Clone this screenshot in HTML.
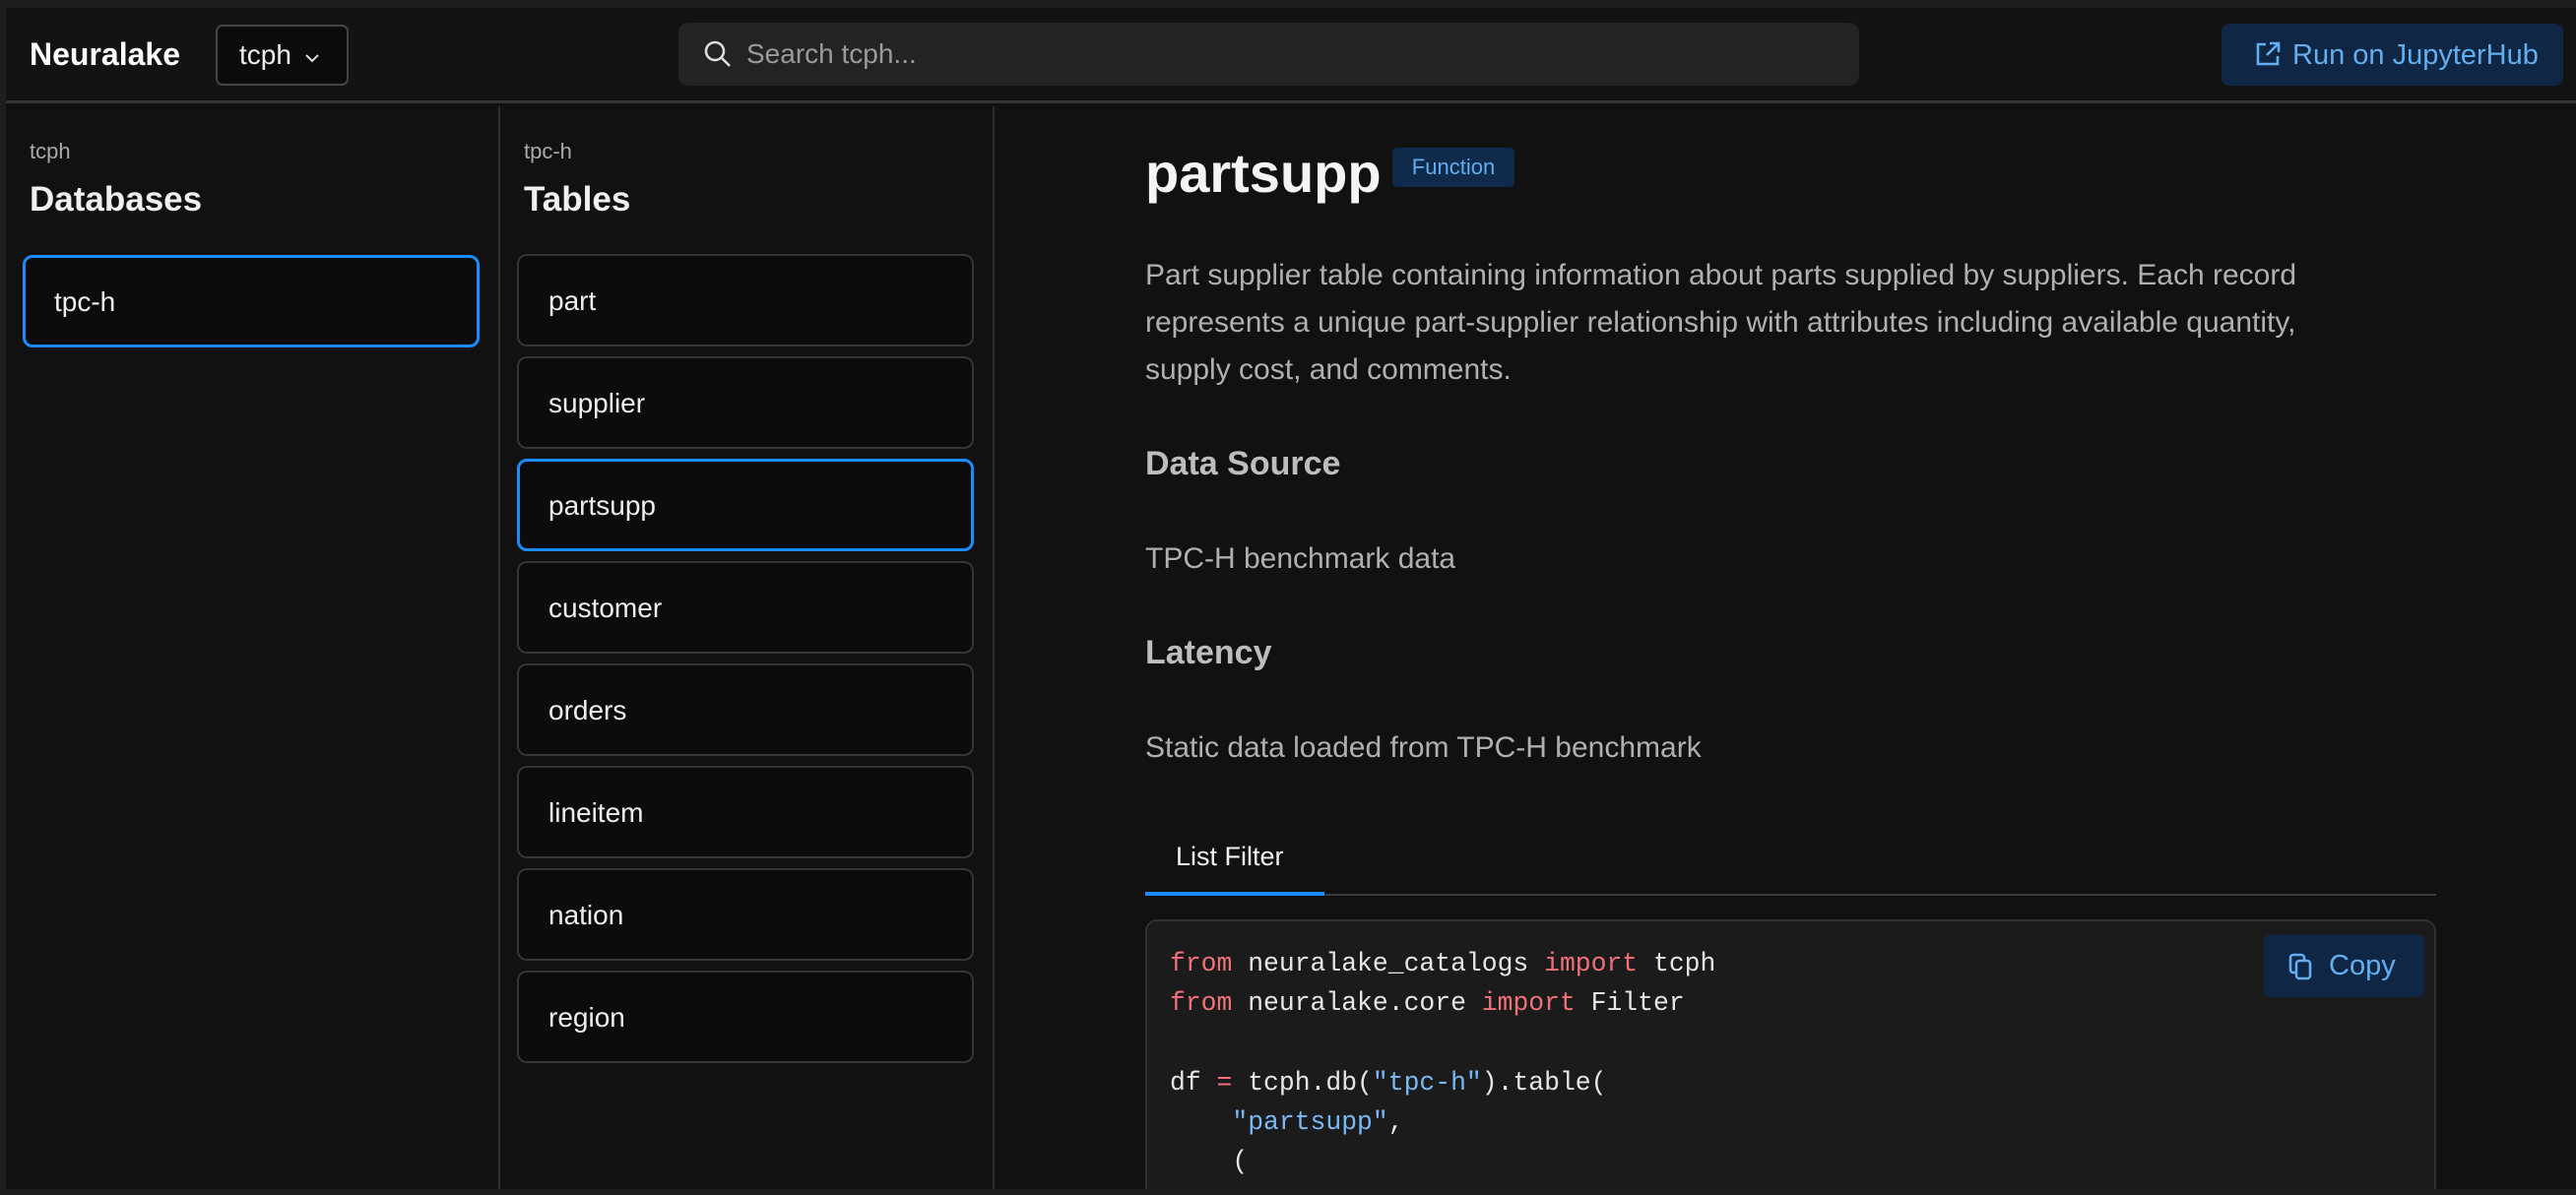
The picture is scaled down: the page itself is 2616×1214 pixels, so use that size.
<!DOCTYPE html>
<html><head><meta charset="utf-8"><style>
*{box-sizing:border-box;margin:0;padding:0}
body{width:2616px;height:1214px;overflow:hidden;background:#1e1e1e;font-family:"Liberation Sans",sans-serif;color:#eee;position:relative}
.app{position:absolute;left:6px;top:8px;right:0;bottom:6px;background:#111;overflow:hidden}
.hdr{position:absolute;left:0;top:0;right:0;height:97px;background:#131313;border-bottom:3px solid #333}
.a{position:absolute}
.sep{position:absolute;top:100px;bottom:0;width:2px;background:#2e2e2e}
.item{position:absolute;height:94px;border:2px solid #353535;border-radius:10px;background:#0c0c0c;font-size:28px;color:#eee;padding-left:30px;line-height:92px}
.item.sel{border:3px solid #1a8cff;padding-left:29px;line-height:90px}
.p{font-size:30px;color:#b0b0b0;line-height:48px}
.h{font-size:34px;font-weight:bold;color:#bdbdbd}
.code{font-family:"Liberation Mono","DejaVu Sans Mono",monospace;font-size:26.4px;line-height:40.3px;color:#e6e6e6;white-space:pre}
.k{color:#f07178}.s{color:#7ab8f5}
</style></head><body>
<div class="app">
<div class="hdr">
 <div class="a" style="left:24px;top:29px;font-size:32px;font-weight:bold;color:#fff">Neuralake</div>
 <div class="a" style="left:213px;top:17px;width:135px;height:62px;border:2px solid #444;border-radius:7px;background:#0c0c0c;font-size:28px;line-height:58px;padding-left:22px;color:#eee">tcph <svg width="18" height="12" viewBox="0 0 18 12" style="margin-left:4px"><path d="M3 3l6 6 6-6" stroke="#ddd" stroke-width="2" fill="none"/></svg></div>
 <div class="a" style="left:683px;top:15px;width:1199px;height:64px;background:#232323;border-radius:10px">
  <svg class="a" style="left:24px;top:16px" width="32" height="32" viewBox="0 0 32 32"><circle cx="13" cy="13" r="9" stroke="#ddd" stroke-width="2.6" fill="none"/><path d="M20 20l8 8" stroke="#ddd" stroke-width="2.6"/></svg>
  <div class="a" style="left:69px;top:16px;font-size:28px;color:#9a9a9a">Search tcph...</div>
 </div>
 <div class="a" style="left:2250px;top:16px;width:347px;height:63px;background:#0f2744;border-radius:8px">
  <svg class="a" style="left:33px;top:17px" width="28" height="28" viewBox="0 0 28 28"><path d="M12 4H4v20h20v-8M16 3h9v9M25 3L13 15" stroke="#62aef0" stroke-width="2.6" fill="none"/></svg>
  <div class="a" style="left:72px;top:16px;font-size:29px;color:#62aef0">Run on JupyterHub</div>
 </div>
</div>
<div class="sep" style="left:500px"></div>
<div class="sep" style="left:1002px"></div>

<div class="a" style="left:24px;top:133px;font-size:22px;color:#aaa">tcph</div>
<div class="a" style="left:24px;top:175px;font-size:35px;font-weight:bold;color:#f0f0f0">Databases</div>
<div class="item sel" style="left:17px;top:251px;width:464px">tpc-h</div>

<div class="a" style="left:526px;top:133px;font-size:22px;color:#aaa">tpc-h</div>
<div class="a" style="left:526px;top:175px;font-size:35px;font-weight:bold;color:#f0f0f0">Tables</div>
<div class="item" style="left:519px;top:250px;width:464px">part</div>
<div class="item" style="left:519px;top:354px;width:464px">supplier</div>
<div class="item sel" style="left:519px;top:458px;width:464px">partsupp</div>
<div class="item" style="left:519px;top:562px;width:464px">customer</div>
<div class="item" style="left:519px;top:666px;width:464px">orders</div>
<div class="item" style="left:519px;top:770px;width:464px">lineitem</div>
<div class="item" style="left:519px;top:874px;width:464px">nation</div>
<div class="item" style="left:519px;top:978px;width:464px">region</div>

<div class="a" style="left:1157px;top:135px;font-size:56px;font-weight:bold;color:#f4f4f4">partsupp</div>
<div class="a" style="left:1408px;top:142px;width:124px;height:40px;background:#0f2a4a;border-radius:5px;font-size:22px;color:#62aef0;text-align:center;line-height:40px">Function</div>
<div class="a p" style="left:1157px;top:248px;width:1235px">Part supplier table containing information about parts supplied by suppliers. Each record represents a unique part-supplier relationship with attributes including available quantity, supply cost, and comments.</div>
<div class="a h" style="left:1157px;top:444px">Data Source</div>
<div class="a p" style="left:1157px;top:536px">TPC-H benchmark data</div>
<div class="a h" style="left:1157px;top:636px">Latency</div>
<div class="a p" style="left:1157px;top:728px">Static data loaded from TPC-H benchmark</div>

<div class="a" style="left:1188px;top:847px;font-size:27px;color:#f0f0f0">List Filter</div>
<div class="a" style="left:1157px;top:900px;width:1311px;height:2px;background:#3a3a3a"></div>
<div class="a" style="left:1157px;top:898px;width:182px;height:4px;background:#1a8cff"></div>

<div class="a" style="left:1157px;top:926px;width:1311px;height:300px;background:#1b1b1b;border:2px solid #303030;border-radius:12px;overflow:hidden">
 <div class="a" style="left:1134px;top:13px;width:163px;height:64px;background:#0f2744;border-radius:7px">
  <svg class="a" style="left:24px;top:18px" width="28" height="30" viewBox="0 0 28 30"><rect x="3" y="3" width="14" height="18" rx="3" stroke="#62aef0" stroke-width="2.6" fill="none"/><rect x="9" y="9" width="14" height="18" rx="3" stroke="#62aef0" stroke-width="2.6" fill="#0f2744"/></svg>
  <div class="a" style="left:66px;top:16px;font-size:29px;color:#62aef0">Copy</div>
 </div>
 <div class="a code" style="left:23px;top:23px"><span class="k">from</span> neuralake_catalogs <span class="k">import</span> tcph
<span class="k">from</span> neuralake.core <span class="k">import</span> Filter

df <span class="k">=</span> tcph.db(<span class="s">"tpc-h"</span>).table(
    <span class="s">"partsupp"</span>,
    (
        Filter(<span class="s">"ps_partkey"</span>, <span class="s">"="</span>, 1),</div>
</div>
</div>
</body></html>
